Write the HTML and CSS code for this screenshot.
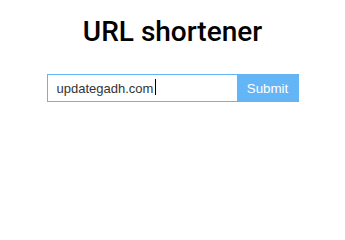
FILE: index.html
```html
<!DOCTYPE html>
<html>
<head>
<meta charset="utf-8">
<link rel="stylesheet" href="styles.css">
</head>
<body>
<div class="app">
  <h1 class="title">URL shortener</h1>
  <form class="form">
    <span class="field">
      <input class="url-input" type="text" value="updategadh.com">
      <span class="caret"></span>
    </span>
    <button class="submit" type="button">Submit</button>
  </form>
</div>
</body>
</html>
```
FILE: styles.css
```css
html, body {
  margin: 0;
  padding: 0;
  background: #fff;
}
.app {
  display: flex;
  flex-direction: column;
  align-items: center;
  font-family: Roboto, "Liberation Sans", sans-serif;
}
.title {
  margin: 16px 0 0;
  font-size: 28px;
  font-weight: 500;
  line-height: 32px;
  color: #000;
}
.form {
  display: flex;
  margin-top: 26px;
}
.field {
  position: relative;
  display: block;
}
.url-input {
  display: block;
  box-sizing: border-box;
  width: 190px;
  height: 28px;
  border: 1px solid #64b5f6;
  border-right: none;
  padding: 0 9px;
  font-family: "Liberation Sans", Arial, sans-serif;
  font-size: 13px;
  color: #333;
  outline: none;
  margin: 0;
}
.caret {
  position: absolute;
  left: 108px;
  top: 5px;
  width: 1px;
  height: 16px;
  background: #000;
}
.submit {
  box-sizing: border-box;
  width: 62px;
  height: 28px;
  border: none;
  background: #64b5f6;
  color: #fff;
  font-family: "Liberation Sans", Arial, sans-serif;
  font-size: 13.333px;
  font-weight: 400;
  margin: 0;
  padding: 0;
}
```
